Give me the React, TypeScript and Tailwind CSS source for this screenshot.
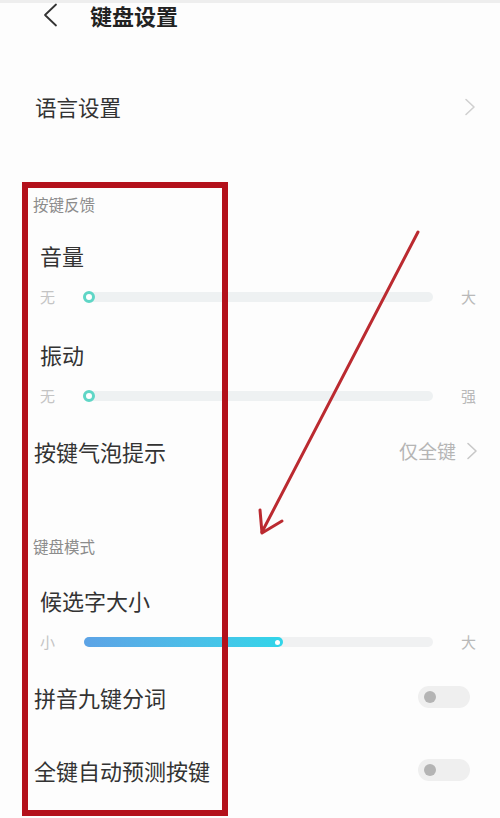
import React from 'react';

const font = { fontFamily: '"Noto Sans CJK SC", "Noto Sans", sans-serif' };

function ChevronRight({ className }: { className?: string }) {
  return (
    <svg className={className} width="12" height="18" viewBox="0 0 12 18" fill="none">
      <path d="M2 1.5 L10 9 L2 16.5" stroke="currentColor" strokeWidth="1.6" strokeLinecap="round" strokeLinejoin="round" />
    </svg>
  );
}

function SectionLabel({ text, top }: { text: string; top: string }) {
  return (
    <div className={`${top} h-[20px] flex items-center pl-[33px] text-[15.5px] text-[#8c8c8c]`}>{text}</div>
  );
}

function Row({ label, indent, top, right, pr = 'pr-[22px]' }: { label: string; indent?: boolean; top: string; right?: React.ReactNode; pr?: string }) {
  return (
    <div className={`${top} h-[30px] flex items-center justify-between ${pr} ${indent ? 'pl-[40px]' : 'pl-[34px]'}`}>
      <span className="text-[22px] text-[#333333] leading-none">{label}</span>
      {right}
    </div>
  );
}

function DotSlider({ min, max, top }: { min: string; max: string; top: string }) {
  return (
    <div className={`${top} h-[20px] flex items-center pl-[40px] pr-[24px]`}>
      <span className="w-[43px] text-[15px] text-[#c4c4c4]">{min}</span>
      <div className="relative flex-1 h-[10px] rounded-full bg-[#eef1f2] mr-[28px]">
        <div className="absolute left-0 top-[-1px] w-[12px] h-[12px] rounded-full border-[3px] border-[#5fd6c6] bg-white" />
      </div>
      <span className="text-[15px] text-[#b9b9b9]">{max}</span>
    </div>
  );
}

function Toggle() {
  return (
    <div className="w-[52px] h-[22px] rounded-full bg-[#efefef] flex items-center pl-[6px]">
      <div className="w-[12px] h-[12px] rounded-full bg-[#b4b4b4]" />
    </div>
  );
}

export default function App() {
  return (
    <div className="relative w-[500px] h-[818px] overflow-hidden bg-[#fdfdfd]" style={font}>
      <div className="absolute left-0 top-0 w-full h-[3px] bg-[#eeeeee]" />

      {/* header */}
      <div className="h-[28px] pt-[2px] flex items-center pl-[42px]">
        <svg width="16" height="24" viewBox="0 0 16 24" fill="none">
          <path d="M14 1.5 L3 12 L14 22.5" stroke="#333" strokeWidth="1.8" strokeLinecap="round" strokeLinejoin="round" />
        </svg>
        <span className="ml-[32px] text-[22px] font-bold text-[#222] leading-none">键盘设置</span>
      </div>

      <div className="mt-[64px] h-[30px] flex items-center justify-between pl-[35px] pr-[24px]">
        <span className="text-[21.5px] text-[#333] leading-none">语言设置</span>
        <ChevronRight className="text-[#d0d0d0]" />
      </div>

      <SectionLabel text="按键反馈" top="mt-[73px]" />
      <Row label="音量" indent top="mt-[25px]" />
      <DotSlider min="无" max="大" top="mt-[17px]" />
      <Row label="振动" indent top="mt-[32px]" />
      <DotSlider min="无" max="强" top="mt-[17px]" />
      <Row
        label="按键气泡提示"
        top="mt-[30px]"
        right={
          <span className="flex items-center gap-[10px] text-[19px] text-[#b5b5b5]">
            仅全键
            <ChevronRight className="text-[#c8c8c8]" />
          </span>
        }
      />

      <SectionLabel text="键盘模式" top="mt-[71px]" />
      <Row label="候选字大小" indent top="mt-[28px]" />
      <div className="mt-[17px] h-[20px] flex items-center pl-[40px] pr-[24px]">
        <span className="w-[44px] text-[15px] text-[#c4c4c4]">小</span>
        <div className="relative flex-1 h-[10px] rounded-full bg-[#f0f1f2] mr-[28px]">
          <div className="absolute left-0 top-0 h-[10px] w-[199px] rounded-full bg-gradient-to-r from-[#5ca3e6] to-[#30d5e9] flex items-center justify-end pr-[3px]">
            <div className="w-[5px] h-[5px] rounded-full bg-white" />
          </div>
        </div>
        <span className="text-[15px] text-[#b9b9b9]">大</span>
      </div>
      <Row label="拼音九键分词" top="mt-[30px]" pr="pr-[30px]" right={<Toggle />} />
      <Row label="全键自动预测按键" top="mt-[43px]" pr="pr-[30px]" right={<Toggle />} />

      {/* annotation box */}
      <div className="absolute left-[22px] top-[182px] w-[206px] h-[634px] border-[6px] border-[#b3111b] pointer-events-none" />

      {/* annotation arrow */}
      <svg className="absolute left-0 top-0 pointer-events-none" width="500" height="818" viewBox="0 0 500 818" fill="none">
        <path d="M418 232 L262 532" stroke="#bb2a30" strokeWidth="3" strokeLinecap="round" />
        <path d="M260 510 L262 533 L282 521" stroke="#bb2a30" strokeWidth="3" strokeLinecap="round" strokeLinejoin="round" />
      </svg>
    </div>
  );
}
